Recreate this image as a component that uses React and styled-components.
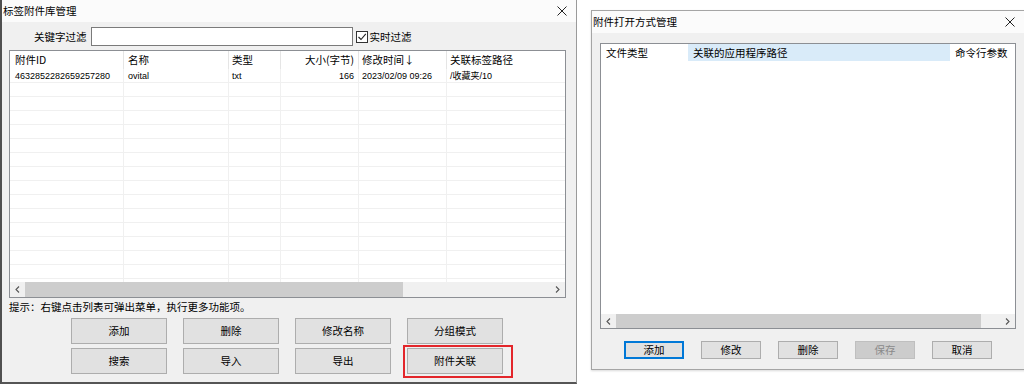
import React from 'react';
import styled, { createGlobalStyle } from 'styled-components';

const GlobalStyle = createGlobalStyle`
  html, body {
    margin: 0;
    padding: 0;
    background: #ffffff;
    width: 1024px;
    height: 384px;
    overflow: hidden;
    font-family: "Noto Sans CJK SC", "Liberation Sans", sans-serif;
    color: #000;
  }
  * { box-sizing: border-box; }
`;

const Page = styled.div`
  display: flex;
  align-items: flex-start;
  width: 1024px;
  height: 384px;
  overflow: hidden;
`;

const Dialog = styled.div`
  flex: none;
  display: flex;
  flex-direction: column;
  background: #f0f0f0;
`;

const LeftDialog = styled(Dialog)`
  width: 577px;
  height: 384px;
  border-left: 2px solid #505050;
  border-right: 1px solid #9a9a9a;
  border-bottom: 2px solid #555555;
`;

const RightDialog = styled(Dialog)`
  width: 440px;
  height: 360px;
  margin: 10px 0 0 14px;
  border: 1px solid #a5a5a5;
  border-right: none;
  box-shadow: 0 1px 2px rgba(0, 0, 0, 0.15);
`;

const TitleBar = styled.div`
  height: 22px;
  flex: none;
  display: flex;
  align-items: center;
  justify-content: space-between;
  padding: 0 ${(p) => p.$padRight}px 0 ${(p) => p.$padLeft}px;
  background: #fbfbfb;
  font-size: 10.5px;
  line-height: 14px;
`;

const Body = styled.div`
  flex: 1;
  display: flex;
  flex-direction: column;
  padding: ${(p) => p.$pad};
`;

const FilterRow = styled.div`
  height: 19px;
  margin-top: 5px;
  padding-left: 25px;
  display: flex;
  align-items: center;
  font-size: 10.5px;
  line-height: 14px;
`;

const FilterLabel = styled.span`
  margin-right: 4px;
`;

const TextInput = styled.div`
  width: 262px;
  height: 19px;
  background: #fff;
  border: 1px solid #7a7a7a;
`;

const Check = styled.span`
  width: 12px;
  height: 12px;
  margin: 0 2px 0 3px;
  border: 1px solid #333;
  background: #fff;
  display: flex;
  align-items: center;
  justify-content: center;
`;

const ListBox = styled.div`
  width: ${(p) => p.$w}px;
  height: ${(p) => p.$h}px;
  margin-top: ${(p) => p.$mt}px;
  border: 1px solid #8c8f94;
  background: #fff;
  display: flex;
  flex-direction: column;
  overflow: hidden;
`;

const HeaderRow = styled.div`
  height: ${(p) => p.$h || 17}px;
  flex: none;
  display: flex;
`;

const HeaderCell = styled.div`
  flex: none;
  width: ${(p) => p.$w}px;
  padding: 0 ${(p) => p.$pr || 0}px 0 ${(p) => p.$pl || 0}px;
  text-align: ${(p) => p.$align || 'left'};
  border-right: ${(p) => (p.$sep ? '1px solid #e5e5e5' : 'none')};
  background: ${(p) => (p.$active ? '#d9ebf9' : 'transparent')};
  font-size: 10.5px;
  line-height: 17px;
  white-space: nowrap;
  overflow: hidden;
`;

const Rows = styled.div`
  flex: 1;
  overflow: hidden;
`;

const Row = styled.div`
  height: 14px;
  display: flex;
  border-bottom: 1px solid #f0f0f0;
`;

const Cell = styled.div`
  flex: none;
  width: ${(p) => p.$w}px;
  padding: 0 ${(p) => p.$pr || 0}px 0 ${(p) => p.$pl || 0}px;
  text-align: ${(p) => p.$align || 'left'};
  border-right: 1px solid #f0f0f0;
  font-family: "Liberation Sans", "Noto Sans CJK SC", sans-serif;
  font-size: 9px;
  line-height: 14px;
  white-space: nowrap;
  overflow: hidden;
`;

const ScrollBar = styled.div`
  height: ${(p) => p.$h}px;
  flex: none;
  display: flex;
  background: #f0f0f0;
`;

const Arrow = styled.div`
  width: ${(p) => p.$w}px;
  flex: none;
  display: flex;
  align-items: center;
  justify-content: center;
`;

const Thumb = styled.div`
  width: ${(p) => p.$w}px;
  flex: none;
  background: #cdcdcd;
`;

const Track = styled.div`
  flex: 1;
`;

const Hint = styled.div`
  margin-top: 2px;
  font-size: 10.5px;
  line-height: 14px;
`;

const ButtonGrid = styled.div`
  margin: 4px 0 0 62px;
  display: grid;
  grid-template-columns: repeat(4, 96px);
  grid-auto-rows: 26px;
  column-gap: 16px;
  row-gap: 4px;
`;

const ButtonRow = styled.div`
  margin-top: 12px;
  width: 416px;
  display: flex;
  justify-content: center;
  gap: 17px;
`;

const Button = styled.div`
  position: relative;
  width: ${(p) => p.$w}px;
  height: ${(p) => p.$h}px;
  display: flex;
  align-items: center;
  justify-content: center;
  background: ${(p) => (p.$disabled ? '#cccccc' : '#e1e1e1')};
  border: 1px solid ${(p) => (p.$focus ? '#0078d7' : p.$disabled ? '#bfbfbf' : '#adadad')};
  box-shadow: ${(p) => (p.$focus ? 'inset 0 0 0 1px #0078d7' : 'none')};
  color: ${(p) => (p.$disabled ? '#8a8a8a' : '#000')};
  font-size: 10.5px;
  line-height: 14px;
`;

const Highlight = styled.span`
  position: absolute;
  top: -4px;
  left: -5px;
  right: -11px;
  bottom: -5px;
  border: 2px solid #e3262b;
  pointer-events: none;
`;

const CloseIcon = () => (
  <svg width="10" height="10" viewBox="0 0 10 10">
    <path d="M0.5 0.5 L9.5 9.5 M9.5 0.5 L0.5 9.5" stroke="#222" strokeWidth="1" fill="none" />
  </svg>
);

const ChevronIcon = ({ right }) => (
  <svg width="5" height="7" viewBox="0 0 5 7">
    <path
      d={right ? 'M1 0.5 L4 3.5 L1 6.5' : 'M4 0.5 L1 3.5 L4 6.5'}
      stroke="#555"
      strokeWidth="1.1"
      fill="none"
    />
  </svg>
);

const columns = [
  { key: 'id', title: '附件ID', w: 114, pl: 5 },
  { key: 'name', title: '名称', w: 105, pl: 4 },
  { key: 'type', title: '类型', w: 52, pl: 3 },
  { key: 'size', title: '大小(字节)', w: 78, pr: 4, align: 'right' },
  { key: 'time', title: '修改时间↓', w: 88, pl: 3 },
  { key: 'path', title: '关联标签路径', w: 130, pl: 3 },
];

const attachments = [
  {
    id: '4632852282659257280',
    name: 'ovital',
    type: 'txt',
    size: '166',
    time: '2023/02/09 09:26',
    path: '/收藏夹/10',
  },
];

const emptyRows = Array.from({ length: 16 }, (_, i) => i);

const leftButtons = ['添加', '删除', '修改名称', '分组模式', '搜索', '导入', '导出', '附件关联'];

const openWithCols = [
  { title: '文件类型', w: 87 },
  { title: '关联的应用程序路径', w: 262, active: true },
  { title: '命令行参数', w: 100 },
];

const App = () => (
  <>
    <GlobalStyle />
    <Page>
      <LeftDialog>
        <TitleBar $padLeft={1} $padRight={9}>
          <span>标签附件库管理</span>
          <CloseIcon />
        </TitleBar>
        <Body $pad="0 10px 0 7px">
          <FilterRow>
            <FilterLabel>关键字过滤</FilterLabel>
            <TextInput />
            <Check>
              <svg width="10" height="10" viewBox="0 0 10 10">
                <path d="M1.5 5 L4 7.5 L8.8 1.8" stroke="#222" strokeWidth="1.1" fill="none" />
              </svg>
            </Check>
            <span>实时过滤</span>
          </FilterRow>

          <ListBox $w={557} $h={248} $mt={4}>
            <HeaderRow $h={18}>
              {columns.map((c) => (
                <HeaderCell key={c.key} $w={c.w} $pl={c.pl} $pr={c.pr} $align={c.align} $sep>
                  {c.title}
                </HeaderCell>
              ))}
            </HeaderRow>
            <Rows>
              {attachments.map((a) => (
                <Row key={a.id}>
                  {columns.map((c) => (
                    <Cell key={c.key} $w={c.w} $pl={c.pl} $pr={c.pr} $align={c.align}>
                      {a[c.key]}
                    </Cell>
                  ))}
                </Row>
              ))}
              {emptyRows.map((i) => (
                <Row key={i}>
                  {columns.map((c) => (
                    <Cell key={c.key} $w={c.w} />
                  ))}
                </Row>
              ))}
            </Rows>
            <ScrollBar $h={15}>
              <Arrow $w={15}>
                <ChevronIcon />
              </Arrow>
              <Thumb $w={378} />
              <Track />
              <Arrow $w={15}>
                <ChevronIcon right />
              </Arrow>
            </ScrollBar>
          </ListBox>

          <Hint>提示：右键点击列表可弹出菜单，执行更多功能项。</Hint>

          <ButtonGrid>
            {leftButtons.map((label) => (
              <Button key={label} $w={96} $h={26}>
                {label}
                {label === '附件关联' && <Highlight />}
              </Button>
            ))}
          </ButtonGrid>
        </Body>
      </LeftDialog>

      <RightDialog>
        <TitleBar $padLeft={1} $padRight={16}>
          <span>附件打开方式管理</span>
          <CloseIcon />
        </TitleBar>
        <Body $pad="0 0 0 8px">
          <ListBox $w={416} $h={286} $mt={10}>
            <HeaderRow>
              {openWithCols.map((c) => (
                <HeaderCell key={c.title} $w={c.w} $pl={5} $active={c.active}>
                  {c.title}
                </HeaderCell>
              ))}
            </HeaderRow>
            <Rows />
            <ScrollBar $h={14}>
              <Arrow $w={15}>
                <ChevronIcon />
              </Arrow>
              <Thumb $w={365} />
              <Track />
              <Arrow $w={16}>
                <ChevronIcon right />
              </Arrow>
            </ScrollBar>
          </ListBox>
          <ButtonRow>
            <Button $w={60} $h={18} $focus>添加</Button>
            <Button $w={60} $h={18}>修改</Button>
            <Button $w={60} $h={18}>删除</Button>
            <Button $w={60} $h={18} $disabled>保存</Button>
            <Button $w={60} $h={18}>取消</Button>
          </ButtonRow>
        </Body>
      </RightDialog>
    </Page>
  </>
);

export default App;
